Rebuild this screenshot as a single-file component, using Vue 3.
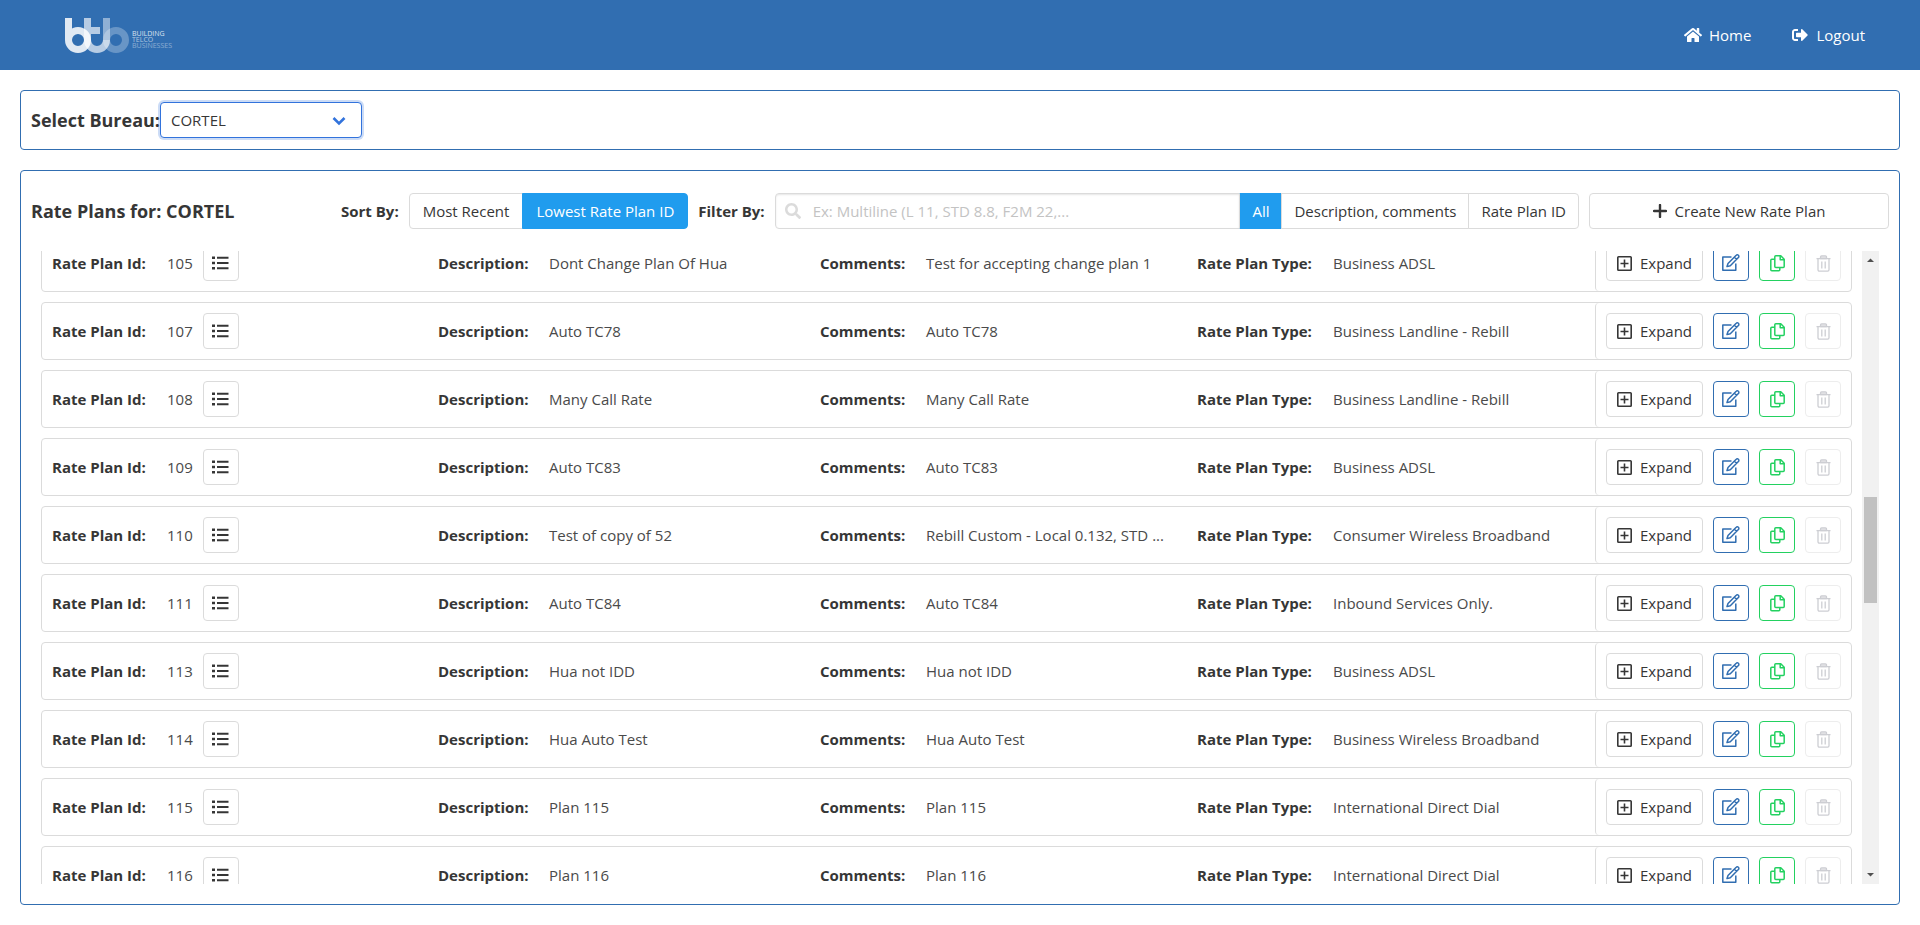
<script setup>
import { onMounted, ref } from 'vue'

const bureau = ref('CORTEL')
const bureaus = ['CORTEL']
const sortOptions = ['Most Recent', 'Lowest Rate Plan ID']
const sortBy = ref('Lowest Rate Plan ID')
const filterOptions = ['All', 'Description, comments', 'Rate Plan ID']
const filterBy = ref('All')
const query = ref('')

const plans = [
  { id: 105, description: 'Dont Change Plan Of Hua', comments: 'Test for accepting change plan 1', type: 'Business ADSL' },
  { id: 107, description: 'Auto TC78', comments: 'Auto TC78', type: 'Business Landline - Rebill' },
  { id: 108, description: 'Many Call Rate', comments: 'Many Call Rate', type: 'Business Landline - Rebill' },
  { id: 109, description: 'Auto TC83', comments: 'Auto TC83', type: 'Business ADSL' },
  { id: 110, description: 'Test of copy of 52', comments: 'Rebill Custom - Local 0.132, STD ...', type: 'Consumer Wireless Broadband' },
  { id: 111, description: 'Auto TC84', comments: 'Auto TC84', type: 'Inbound Services Only.' },
  { id: 113, description: 'Hua not IDD', comments: 'Hua not IDD', type: 'Business ADSL' },
  { id: 114, description: 'Hua Auto Test', comments: 'Hua Auto Test', type: 'Business Wireless Broadband' },
  { id: 115, description: 'Plan 115', comments: 'Plan 115', type: 'International Direct Dial' },
  { id: 116, description: 'Plan 116', comments: 'Plan 116', type: 'International Direct Dial' },
]

const thumb = { before: 229, size: 106, after: 264 }

const list = ref(null)
onMounted(() => {
  list.value.scrollTop = 17
})
</script>

<template>
  <div class="page">
    <header class="navbar">
      <a class="brand" href="#" aria-label="Building Telco Businesses">
        <svg width="110" height="34" viewBox="65 18 110 34" overflow="visible" fill="none" stroke="#fff" stroke-width="7">
          <path d="M68.500 18V40a9.500 9.500 0 1 0 9.500-9.500a9.500 9.500 0 0 0-9.500 9.500" opacity=".85" />
          <path d="M87.500 18V40a9.500 9.500 0 0 0 19 0M91 30.500H100" opacity=".65" />
          <path d="M106.500 18V40" opacity=".46" />
          <circle cx="116" cy="40" r="9.500" opacity=".27" />
          <g fill="#fff" stroke="none" font-family="'Open Sans', sans-serif" font-size="7">
            <text x="132" y="36" opacity=".8">BUILDING</text>
            <text x="132" y="42" opacity=".6">TELCO</text>
            <text x="132" y="48" opacity=".42">BUSINESSES</text>
          </g>
        </svg>
      </a>
      <nav class="links">
        <a href="#">
          <svg width="18" height="16" viewBox="0 0 576 512" fill="currentColor"><path d="M280.370 148.260L96 300.110V464a16 16 0 0 0 16 16l112.060-.29a16 16 0 0 0 15.920-16V368a16 16 0 0 1 16-16h64a16 16 0 0 1 16 16v95.640a16 16 0 0 0 16 16.050L464 480a16 16 0 0 0 16-16V300L295.670 148.260a12.190 12.190 0 0 0-15.300 0zM571.600 251.470L488 182.560V44.050a12 12 0 0 0-12-12h-56a12 12 0 0 0-12 12v72.610L318.470 43a48 48 0 0 0-61 0L4.340 251.470a12 12 0 0 0-1.600 16.900l25.500 31A12 12 0 0 0 45.150 301l235.220-193.740a12.190 12.190 0 0 1 15.300 0L530.900 301a12 12 0 0 0 16.900-1.600l25.500-31a12 12 0 0 0-1.700-16.930z" /></svg>
          <span>Home</span>
        </a>
        <a href="#">
          <svg width="18" height="16" viewBox="0 0 512 512" fill="currentColor"><path d="M497 273L329 441c-15 15-41 4.500-41-17v-96H152c-13.300 0-24-10.700-24-24v-96c0-13.300 10.700-24 24-24h136V88c0-21.400 25.900-32 41-17l168 168c9.300 9.400 9.300 24.600 0 34zM192 436v-40c0-6.600-5.400-12-12-12H96c-17.700 0-32-14.300-32-32V160c0-17.700 14.300-32 32-32h84c6.600 0 12-5.400 12-12V76c0-6.600-5.400-12-12-12H96c-53 0-96 43-96 96v192c0 53 43 96 96 96h84c6.600 0 12-5.400 12-12z" /></svg>
          <span>Logout</span>
        </a>
      </nav>
    </header>

    <main class="content">
      <section class="card bureau">
        <label class="heading" for="bureau">Select Bureau:</label>
        <div class="select">
          <select id="bureau" v-model="bureau">
            <option v-for="name in bureaus" :key="name">{{ name }}</option>
          </select>
          <svg class="chevron" width="14" height="10" viewBox="0 0 14 10" fill="none" stroke="currentColor" stroke-width="2.600"><path d="M1.500 2L7 7.500L12.500 2" /></svg>
        </div>
      </section>

      <section class="card plans">
        <div class="toolbar">
          <h1 class="heading title">Rate Plans for: {{ bureau }}</h1>
          <span class="label">Sort By:</span>
          <div class="group sort" role="group" aria-label="Sort By">
            <button v-for="option in sortOptions" :key="option" type="button" class="button" :class="{ active: option === sortBy }" @click="sortBy = option">{{ option }}</button>
          </div>
          <label class="label" for="filter">Filter By:</label>
          <div class="group filter">
            <div class="search">
              <svg class="lens" width="16" height="16" viewBox="0 0 512 512" fill="currentColor"><path d="M505 442.700L405.300 343c-4.500-4.500-10.600-7-17-7H372c27.600-35.300 44-79.700 44-128C416 93.100 322.900 0 208 0S0 93.100 0 208s93.100 208 208 208c48.300 0 92.700-16.400 128-44v16.300c0 6.400 2.500 12.500 7 17l99.700 99.700c9.400 9.400 24.600 9.400 33.900 0l28.300-28.300c9.400-9.400 9.400-24.600.1-34zM208 336c-70.700 0-128-57.200-128-128 0-70.700 57.200-128 128-128 70.700 0 128 57.200 128 128 0 70.700-57.200 128-128 128z" /></svg>
              <input id="filter" v-model="query" type="text" placeholder="Ex: Multiline (L 11, STD 8.8, F2M 22,..." />
            </div>
            <button v-for="option in filterOptions" :key="option" type="button" class="button" :class="{ active: option === filterBy }" @click="filterBy = option">{{ option }}</button>
          </div>
          <button type="button" class="button create">
            <svg width="14" height="14" viewBox="0 0 14 14" fill="none" stroke="currentColor" stroke-width="2.400" stroke-linecap="round"><path d="M7 1V13M1 7H13" /></svg>
            <span>Create New Rate Plan</span>
          </button>
        </div>

        <div class="viewport">
          <div ref="list" class="list">
            <article v-for="plan in plans" :key="plan.id" class="row">
              <dl class="fields">
                <div class="field">
                  <dt class="w-id">Rate Plan Id:</dt>
                  <dd>{{ plan.id }}</dd>
                  <dd class="tool">
                    <button type="button" class="button square" aria-label="Show plan items">
                      <svg width="17" height="14" viewBox="0 0 17 14" fill="currentColor"><path d="M0 .5h3v2.500H0zM0 5.700h3v2.500H0zM0 10.900h3v2.500H0zM5 .7h11.500v2H5zM5 6h11.500v2H5zM5 11.200h11.500v2H5z" /></svg>
                    </button>
                  </dd>
                </div>
                <div class="field">
                  <dt class="w-description">Description:</dt>
                  <dd>{{ plan.description }}</dd>
                </div>
                <div class="field">
                  <dt class="w-comments">Comments:</dt>
                  <dd>{{ plan.comments }}</dd>
                </div>
                <div class="field">
                  <dt class="w-type">Rate Plan Type:</dt>
                  <dd>{{ plan.type }}</dd>
                </div>
              </dl>
              <div class="actions">
                <button type="button" class="button expand">
                  <svg width="15" height="15" viewBox="0 0 15 15" fill="none" stroke="currentColor"><rect x=".8" y=".8" width="13.400" height="13.400" rx=".8" stroke-width="1.600" /><path d="M7.500 3.500v8M3.500 7.500h8" stroke-width="1.600" /></svg>
                  <span>Expand</span>
                </button>
                <button type="button" class="button square edit" aria-label="Edit">
                  <svg width="18" height="18" viewBox="0 0 18 18" fill="none" stroke="currentColor" stroke-width="1.500" stroke-linejoin="round"><path d="M9.500 3H.8v13.300h13V9.500" /><path d="M6 9.500L14.200 1.300a1.500 1.500 0 0 1 2.200 0a1.500 1.500 0 0 1 0 2.200L8.300 11.700L5 12.600zM12.400 3.100l2.200 2.200" /></svg>
                </button>
                <button type="button" class="button square copy" aria-label="Copy">
                  <svg width="15" height="17" viewBox="0 0 15 17" fill="none" stroke="currentColor" stroke-width="1.500" stroke-linejoin="round"><path d="M5.800.8h5l3.400 3.400v7.400a1 1 0 0 1-1 1H5.800a1 1 0 0 1-1-1V1.800a1 1 0 0 1 1-1z" /><path d="M10.200.8v4h4" /><path d="M4.800 4.200h-3a1 1 0 0 0-1 1v9.600a1 1 0 0 0 1 1h7a1 1 0 0 0 1-1v-2" /></svg>
                </button>
                <button type="button" class="button square" aria-label="Delete" disabled>
                  <svg width="15" height="17" viewBox="0 0 15 17" fill="none" stroke="currentColor" stroke-width="1.300" stroke-linejoin="round"><path fill="currentColor" fill-opacity=".5" d="M4.500 3.500V2a1.200 1.200 0 0 1 1.200-1.200h3.600A1.200 1.200 0 0 1 10.500 2v1.500z" /><path d="M.5 3.700h14M2 3.700v11.100a1.300 1.300 0 0 0 1.300 1.300h8.400a1.300 1.300 0 0 0 1.300-1.300V3.700M5.800 6.500v7M9.200 6.500v7" /></svg>
                </button>
              </div>
            </article>
          </div>
          <div class="scrollbar" aria-hidden="true">
            <svg width="17" height="17" viewBox="0 0 17 17" fill="#505050"><path d="M5 11L8.500 7.500L12 11z" /></svg>
            <div class="track">
              <span :style="{ flexGrow: thumb.before }"></span>
              <span class="thumb" :style="{ flexGrow: thumb.size }"></span>
              <span :style="{ flexGrow: thumb.after }"></span>
            </div>
            <svg width="17" height="17" viewBox="0 0 17 17" fill="#505050"><path d="M5 6L8.500 9.500L12 6z" /></svg>
          </div>
        </div>
      </section>
    </main>
  </div>
</template>

<style>
body {
  margin: 0;
  background: #fff;
}
</style>

<style scoped>
* {
  box-sizing: border-box;
}

.page {
  display: flex;
  flex-direction: column;
  height: 100vh;
  min-height: 480px;
  color: #4a4a4a;
  font: 15px/24px 'Open Sans', 'Noto Sans', sans-serif;
}

.navbar {
  display: flex;
  flex: none;
  align-items: center;
  justify-content: space-between;
  height: 70px;
  padding: 0 55px 0 65px;
  background: #316eb1;
}

.brand {
  display: flex;
}

.links {
  display: flex;
  gap: 40px;
}

.links a {
  display: flex;
  align-items: center;
  gap: 7px;
  color: #fff;
  text-decoration: none;
}

.content {
  display: flex;
  flex: 1;
  flex-direction: column;
  gap: 20px;
  min-height: 0;
  padding: 20px;
}

.card {
  border: 1px solid #316eb1;
  border-radius: 4px;
}

.heading {
  margin: 0;
  color: #363636;
  font-size: 18px;
  font-weight: 700;
  line-height: 24px;
}

.bureau {
  display: flex;
  align-items: center;
  height: 60px;
  padding: 0 10px;
}

.select {
  position: relative;
  width: 202px;
}

.select select {
  width: 100%;
  height: 36px;
  padding: 0 10px;
  appearance: none;
  border: 1px solid #3273dc;
  border-radius: 4px;
  outline: none;
  background: #fff;
  box-shadow: 0 0 0 2px rgba(50, 115, 220, 0.25);
  color: #363636;
  font: inherit;
}

.chevron {
  position: absolute;
  top: 14px;
  right: 16px;
  color: #3273dc;
  pointer-events: none;
}

.plans {
  display: flex;
  flex: 1;
  flex-direction: column;
  gap: 22px;
  min-height: 0;
  padding: 22px 10px 20px;
}

.toolbar {
  display: flex;
  align-items: center;
  gap: 10px;
}

.title {
  width: 300px;
}

.label {
  color: #363636;
  font-weight: 700;
}

.button {
  display: flex;
  align-items: center;
  justify-content: center;
  height: 36px;
  margin: 0;
  padding: 0 12px;
  border: 1px solid #dbdbdb;
  border-radius: 4px;
  background: #fff;
  color: #363636;
  font: inherit;
  white-space: nowrap;
}

.group {
  display: flex;
}

.group .button {
  margin-left: -1px;
  border-radius: 0;
}

.group .button:last-child {
  border-radius: 0 4px 4px 0;
}

.sort .button {
  padding: 0 13px;
}

.sort .button:first-child {
  margin-left: 0;
  border-radius: 4px 0 0 4px;
}

.group .button.active {
  border-color: #209cee;
  background: #209cee;
  color: #fff;
}

.filter {
  flex: 1;
}

.search {
  position: relative;
  flex: 1;
}

.search input {
  width: 100%;
  height: 36px;
  padding: 0 10px 0 37px;
  border: 1px solid #dbdbdb;
  border-radius: 4px 0 0 4px;
  outline: none;
  box-shadow: inset 0 1px 2px rgba(10, 10, 10, 0.1);
  color: #363636;
  font: inherit;
}

.search input::placeholder {
  color: #c3c3c3;
  opacity: 1;
}

.lens {
  position: absolute;
  top: 10px;
  left: 10px;
  color: #dbdbdb;
}

.create {
  gap: 8px;
  width: 300px;
}

.viewport {
  display: flex;
  flex: 1;
  gap: 10px;
  min-height: 0;
  padding: 0 10px;
}

.list {
  display: flex;
  flex: 1;
  flex-direction: column;
  gap: 10px;
  overflow-y: auto;
  scrollbar-width: none;
}

.row {
  display: flex;
  flex: none;
  border: 1px solid #dbdbdb;
  border-radius: 4px;
}

.fields {
  display: grid;
  flex: 1;
  grid-template-columns: 386fr 382fr 377fr 398fr;
  align-items: center;
  margin: 0;
  padding-left: 10px;
}

.field {
  display: flex;
  align-items: center;
}

.field dt {
  flex: none;
  margin-right: 20px;
  color: #363636;
  font-weight: 700;
  white-space: nowrap;
}

.field dd {
  margin: 0;
  white-space: nowrap;
}

.field .tool {
  margin-left: 10px;
}

.w-id {
  width: 95px;
}

.w-description {
  width: 91px;
}

.w-comments {
  width: 86px;
}

.w-type {
  width: 116px;
}

.actions {
  display: flex;
  flex: none;
  gap: 10px;
  padding: 10px;
  border-left: 1px solid #dbdbdb;
  border-radius: 4px;
}

.square {
  width: 36px;
  padding: 0;
}

.expand {
  gap: 8px;
  width: 97px;
  padding: 0;
}

.edit {
  border-color: #316eb1;
  color: #316eb1;
}

.copy {
  border-color: #23d160;
  color: #23d160;
}

.button:disabled {
  border-color: #ededed;
  color: #cdced3;
}

.scrollbar {
  display: flex;
  flex: none;
  flex-direction: column;
  width: 17px;
  background: #f1f1f1;
}

.scrollbar svg {
  flex: none;
}

.track {
  display: flex;
  flex: 1;
  flex-direction: column;
  padding: 0 2px;
}

.track span {
  flex-basis: 0;
}

.thumb {
  background: #c1c1c1;
}
</style>
